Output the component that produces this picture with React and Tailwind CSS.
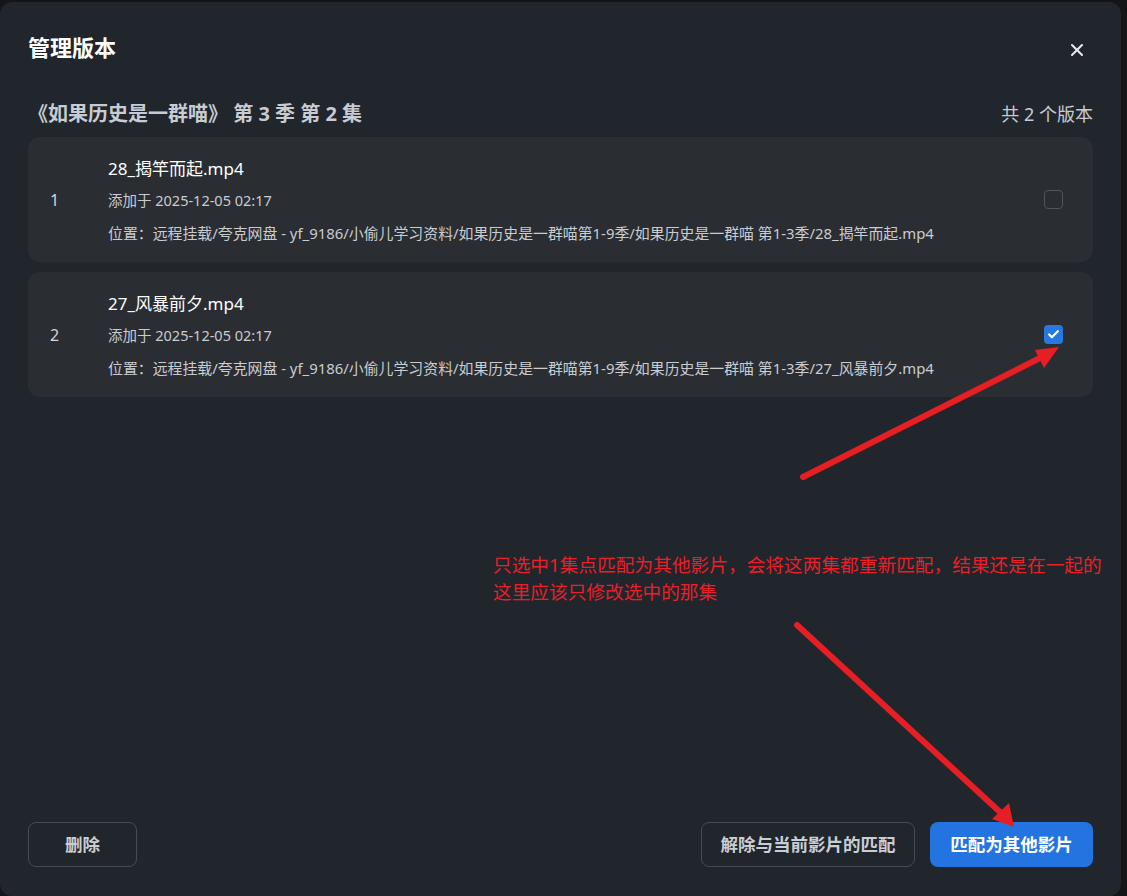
import { X, Check } from 'lucide-react'

const VERSIONS = [
  {
    no: 1,
    name: '28_揭竿而起.mp4',
    added: '添加于 2025-12-05 02:17',
    path: '位置：远程挂载/夸克网盘 - yf_9186/小偷儿学习资料/如果历史是一群喵第1-9季/如果历史是一群喵 第1-3季/28_揭竿而起.mp4',
    checked: false,
  },
  {
    no: 2,
    name: '27_风暴前夕.mp4',
    added: '添加于 2025-12-05 02:17',
    path: '位置：远程挂载/夸克网盘 - yf_9186/小偷儿学习资料/如果历史是一群喵第1-9季/如果历史是一群喵 第1-3季/27_风暴前夕.mp4',
    checked: true,
  },
]

const FONT = "font-['Noto_Sans','Noto_Sans_CJK_SC',sans-serif]"

function VersionCard({ v }) {
  return (
    <div className="flex items-center rounded-[12px] bg-[#2a2e33] h-[125px]">
      <div className="w-[80px] pl-[22px] text-[16px] text-[#d4d7dc]">{v.no}</div>
      <div className="flex-1 flex flex-col">
        <div className="text-[17px] leading-[24px] text-white">{v.name}</div>
        <div className="mt-[9px] text-[14.5px] leading-[20px] text-[#c9ccd1]">{v.added}</div>
        <div className="mt-[13px] text-[14.9px] leading-[20px] text-[#c9ccd1]">{v.path}</div>
      </div>
      <div className="pr-[30px]">
        {v.checked ? (
          <div className="w-[19px] h-[19px] rounded-[4px] bg-[#2878e2] flex items-center justify-center">
            <Check size={13} strokeWidth={4} className="text-white" />
          </div>
        ) : (
          <div className="w-[19px] h-[19px] rounded-[4px] border border-[#50555c]" />
        )}
      </div>
    </div>
  )
}

export default function App() {
  return (
    <div className={`w-[1127px] h-[896px] bg-[#141517] pt-[2px] overflow-hidden ${FONT}`}>
      <div className="relative w-[1121px] h-[894px] rounded-[12px] bg-[#21252c] px-[28px] flex flex-col">
        {/* Header */}
        <div className="flex items-center justify-between pt-[31px]">
          <h2 className="text-[22px] leading-[28px] font-bold text-white">管理版本</h2>
          <X size={20} strokeWidth={2.5} className="text-[#e6e8eb] mr-[6px] mt-[6px]" />
        </div>

        <div className="flex items-center justify-between mt-[40px]">
          <div className="text-[20px] leading-[26px] font-bold text-[#c7ccd3]">《如果历史是一群喵》 第 3 季 第 2 集</div>
          <div className="text-[18px] leading-[26px] text-[#c7ccd3]">共 2 个版本</div>
        </div>

        <div className="mt-[10px] flex flex-col gap-[10px]">
          {VERSIONS.map(v => (
            <VersionCard key={v.no} v={v} />
          ))}
        </div>

        {/* Footer */}
        <div className="mt-auto mb-[29px] flex items-center justify-between">
          <button className="w-[109px] h-[45px] rounded-[8px] border border-[#464b53] text-[17.5px] font-bold text-[#c9ced5]">删除</button>
          <div className="flex items-center gap-[15px]">
            <button className="w-[214px] h-[45px] rounded-[8px] border border-[#464b53] text-[17.5px] font-bold text-[#c9ced5]">解除与当前影片的匹配</button>
            <button className="w-[163px] h-[45px] rounded-[8px] bg-[#2374e0] text-[17.5px] font-bold text-white">匹配为其他影片</button>
          </div>
        </div>

        {/* Red annotation overlay */}
        <div className="absolute left-[493px] top-[549px] text-[18.7px] leading-[27px] text-[#e8202a] whitespace-nowrap">
          <div>只选中1集点匹配为其他影片，会将这两集都重新匹配，结果还是在一起的</div>
          <div>这里应该只修改选中的那集</div>
        </div>
        <svg className="absolute left-0 top-[-2px] pointer-events-none" width="1127" height="896" viewBox="0 0 1127 896">
          <line x1="803" y1="477" x2="1042" y2="357" stroke="#e81e25" strokeWidth="6" strokeLinecap="round" />
          <polygon points="1059,347 1035,350 1044,368" fill="#e81e25" />
          <line x1="797" y1="625" x2="1000" y2="812" stroke="#e81e25" strokeWidth="6" strokeLinecap="round" />
          <polygon points="1014,827 992,819 1009,803" fill="#e81e25" />
        </svg>
      </div>
    </div>
  )
}
